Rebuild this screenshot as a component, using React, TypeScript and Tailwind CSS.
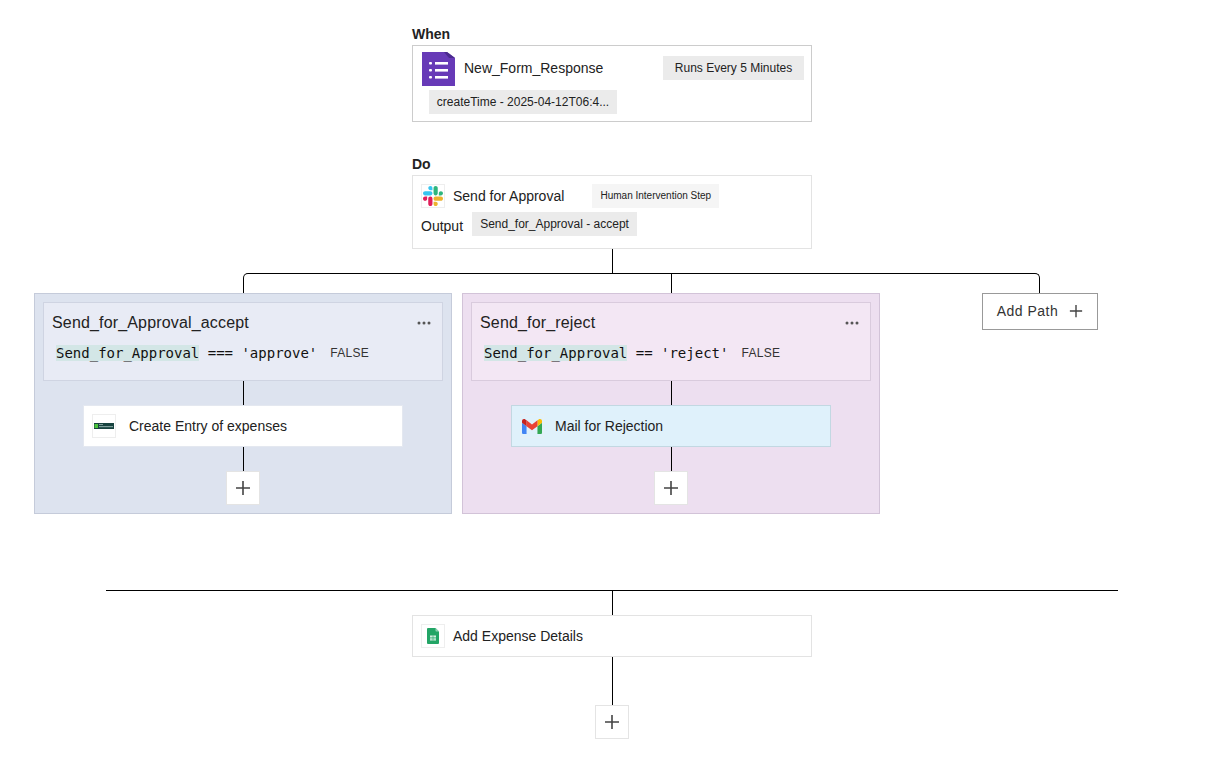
import React from "react";

const FormsIcon = () => (
  <svg width="35" height="35" viewBox="0 0 35 35" className="shrink-0">
    <path d="M1 0h25l8 6v28H1z" fill="#673ab7" />
    <path d="M23 0h3l8 6v0h-6z" fill="#4a2a8e" />
    <rect x="8" y="10" width="3" height="2.6" fill="#fff" rx="1" />
    <rect x="8" y="17" width="3" height="2.6" fill="#fff" rx="1" />
    <rect x="8" y="24" width="3" height="2.6" fill="#fff" rx="1" />
    <rect x="14" y="10" width="13" height="2.6" fill="#fff" />
    <rect x="14" y="17" width="13" height="2.6" fill="#fff" />
    <rect x="14" y="24" width="13" height="2.6" fill="#fff" />
  </svg>
);

const SlackIcon = () => (
  <svg width="20" height="20" viewBox="0 0 122.8 122.8">
    <path d="M25.8 77.6c0 7.1-5.8 12.9-12.9 12.9S0 84.7 0 77.6s5.8-12.9 12.9-12.9h12.9v12.9z" fill="#E01E5A" />
    <path d="M32.3 77.6c0-7.1 5.8-12.9 12.9-12.9s12.9 5.8 12.9 12.9v32.3c0 7.1-5.8 12.9-12.9 12.9s-12.9-5.8-12.9-12.9V77.6z" fill="#E01E5A" />
    <path d="M45.2 25.8c-7.1 0-12.9-5.8-12.9-12.9S38.1 0 45.2 0s12.9 5.8 12.9 12.9v12.9H45.2z" fill="#36C5F0" />
    <path d="M45.2 32.3c7.1 0 12.9 5.8 12.9 12.9s-5.8 12.9-12.9 12.9H12.9C5.8 58.1 0 52.3 0 45.2s5.8-12.9 12.9-12.9h32.3z" fill="#36C5F0" />
    <path d="M97 45.2c0-7.1 5.8-12.9 12.9-12.9s12.9 5.8 12.9 12.9-5.8 12.9-12.9 12.9H97V45.2z" fill="#2EB67D" />
    <path d="M90.5 45.2c0 7.1-5.8 12.9-12.9 12.9s-12.9-5.8-12.9-12.9V12.9C64.7 5.8 70.5 0 77.6 0s12.9 5.8 12.9 12.9v32.3z" fill="#2EB67D" />
    <path d="M77.6 97c7.1 0 12.9 5.8 12.9 12.9s-5.8 12.9-12.9 12.9-12.9-5.8-12.9-12.9V97h12.9z" fill="#ECB22E" />
    <path d="M77.6 90.5c-7.1 0-12.9-5.8-12.9-12.9s5.8-12.9 12.9-12.9h32.3c7.1 0 12.9 5.8 12.9 12.9s-5.8 12.9-12.9 12.9H77.6z" fill="#ECB22E" />
  </svg>
);

const GmailIcon = () => (
  <svg width="20" height="15" viewBox="52 42 88 66">
    <path fill="#4285f4" d="M58 108h14V74L52 59v43c0 3.32 2.69 6 6 6" />
    <path fill="#34a853" d="M120 108h14c3.32 0 6-2.69 6-6V59l-20 15" />
    <path fill="#fbbc04" d="M120 48v26l20-15v-8c0-7.42-8.47-11.65-14.4-7.2" />
    <path fill="#ea4335" d="M72 74V48l24 18 24-18v26L96 92" />
    <path fill="#c5221f" d="M52 51v8l20 15V48l-5.6-4.2c-5.94-4.45-14.4-.22-14.4 7.2" />
  </svg>
);

const SheetsIcon = () => (
  <svg width="12" height="16" viewBox="0 0 12 16">
    <path d="M1 0h7.5L12 3.5V15a1 1 0 0 1-1 1H1a1 1 0 0 1-1-1V1a1 1 0 0 1 1-1z" fill="#23a566" />
    <path d="M8.5 0 12 3.5H9.2a.7.7 0 0 1-.7-.7z" fill="#8ed1b1" />
    <path d="M3 7.5h6v5H3z" fill="#fff" fillOpacity="0.85" />
    <path d="M3 9.4h6M3 10.9h6M6 7.5v5" stroke="#23a566" strokeWidth="0.6" />
  </svg>
);

const AppLogo = () => (
  <svg width="20" height="6" viewBox="0 0 20 6">
    <rect width="20" height="6" fill="#17433f" />
    <rect x="0.5" y="1" width="3.5" height="4" fill="#4bc53c" />
    <rect x="5" y="1.2" width="4" height="0.8" fill="#9fb8b4" />
    <rect x="5" y="3" width="14" height="1.2" fill="#7fa09c" />
  </svg>
);

const IconBox = ({ children, border = "border-[#eeeeee]" }: { children: React.ReactNode; border?: string }) => (
  <div className={`flex h-6 w-6 shrink-0 items-center justify-center border ${border}`}>{children}</div>
);

const Plus = ({ size = 16 }: { size?: number }) => (
  <svg width={size} height={size} viewBox="0 0 16 16" fill="none" stroke="#444444" strokeWidth="1.6">
    <path d="M8 1v14M1 8h14" />
  </svg>
);

const VLine = ({ h }: { h: string }) => <div className={`w-px shrink-0 bg-black ${h}`} />;

const PlusBox = () => (
  <div className="flex h-[34px] w-[34px] shrink-0 items-center justify-center border border-[#e4e4e4] bg-white">
    <Plus />
  </div>
);

const Dots = () => (
  <svg width="14" height="4" viewBox="0 0 14 4" fill="#555555">
    <circle cx="2" cy="2" r="1.5" />
    <circle cx="7" cy="2" r="1.5" />
    <circle cx="12" cy="2" r="1.5" />
  </svg>
);

type PathProps = {
  panel: string;
  header: string;
  title: string;
  op: string;
  action: React.ReactNode;
};

const PathPanel = ({ panel, header, title, op, action }: PathProps) => (
  <div className={`flex h-[221px] w-[418px] shrink-0 flex-col items-center border p-2 ${panel}`}>
    <div className={`h-[79px] w-[400px] shrink-0 border px-2 ${header}`}>
      <div className="flex h-[38px] items-center justify-between pr-[3px] pt-[1px]">
        <span className="text-base tracking-[0.16px] text-[#222222]">{title}</span>
        <Dots />
      </div>
      <div className="mt-1 flex items-center pl-1 text-sm leading-[16px] text-[#111111]">
        <span className="bg-[#d3e6e6] font-['DejaVu_Sans_Mono',monospace]">Send_for_Approval</span>
        <span className="font-['DejaVu_Sans_Mono',monospace] whitespace-pre">{op}</span>
        <span className="ml-[13px] text-xs tracking-[0.3px] text-[#333333]">FALSE</span>
      </div>
    </div>
    <VLine h="h-6" />
    {action}
    <VLine h="h-6" />
    <PlusBox />
  </div>
);

export default function App() {
  return (
    <div className="flex h-[763px] w-[1224px] flex-col items-center overflow-hidden bg-white pt-6 font-['Liberation_Sans',Arial,sans-serif] text-sm text-[#222222]">
      <div className="h-[21px] w-[400px] text-sm font-bold leading-5 text-[#222222]">When</div>
      <div className="h-[77px] w-[400px] shrink-0 border border-[#cccccc] pl-2 pr-[7px] pt-[6px]">
        <div className="flex h-[33px] items-start">
          <FormsIcon />
          <span className="ml-2 mt-[6px] leading-5">New_Form_Response</span>
          <span className="ml-auto mt-1 flex h-6 w-[141px] items-center justify-center bg-[#ebebeb] text-xs">
            Runs Every 5 Minutes
          </span>
        </div>
        <div className="ml-2 mt-[5px] flex h-6 w-[188px] items-center justify-center bg-[#ebebeb] text-xs">
          createTime - 2025-04-12T06:4...
        </div>
      </div>

      <div className="mt-8 h-[21px] w-[400px] text-sm font-bold leading-5 text-[#222222]">Do</div>
      <div className="h-[74px] w-[400px] shrink-0 border border-[#e3e3e3] pl-2 pt-2">
        <div className="flex h-6 items-center">
          <IconBox>
            <SlackIcon />
          </IconBox>
          <span className="ml-2">Send for Approval</span>
          <span className="ml-7 flex h-6 w-[127px] items-center justify-center bg-[#f5f5f5] text-[10px]">
            Human Intervention Step
          </span>
        </div>
        <div className="mt-1 flex h-6 items-center">
          <span className="mt-[3px]">Output</span>
          <span className="ml-[9px] flex h-6 w-[165px] items-center justify-center bg-[#ebebeb] text-xs">
            Send_for_Approval - accept
          </span>
        </div>
      </div>
      <VLine h="h-6" />

      {/* Branch connector: horizontal rail with rounded ends, dropping into each path */}
      <div className="w-full shrink-0 pl-[243px]">
        <div className="h-5 w-[797px] rounded-t-[5px] border-x border-t border-black pl-[427px]">
          <div className="h-full w-px bg-black" />
        </div>
      </div>

      <div className="flex w-full items-start pl-[34px]">
        <PathPanel
          panel="border-[#c5cbda] bg-[#dde3ef]"
          header="border-[#cfd4e2] bg-[#e8ebf5]"
          title="Send_for_Approval_accept"
          op=" === 'approve'"
          action={
            <div className="flex h-[42px] w-80 shrink-0 items-center border border-[#e4e8f0] bg-white pl-2">
              <IconBox>
                <AppLogo />
              </IconBox>
              <span className="ml-[13px]">Create Entry of expenses</span>
            </div>
          }
        />
        <div className="ml-[10px]">
          <PathPanel
            panel="border-[#d2c3d8] bg-[#eddff0]"
            header="border-[#d9cbdd] bg-[#f3e7f4]"
            title="Send_for_reject"
            op=" == 'reject'"
            action={
              <div className="flex h-[42px] w-80 shrink-0 items-center border border-[#c2d8e2] bg-[#dff1fb] pl-2">
                <IconBox border="border-[#e6f0f6]">
                  <GmailIcon />
                </IconBox>
                <span className="ml-[11px]">Mail for Rejection</span>
              </div>
            }
          />
        </div>
        <div className="ml-[102px] flex h-[37px] w-[116px] shrink-0 items-center justify-center gap-[11px] border border-[#999999] pb-[2px] tracking-[0.5px] text-[#333333]">
          Add Path
          <Plus size={14} />
        </div>
      </div>

      <div className="mt-[76px] h-px w-[1012px] shrink-0 bg-black" />
      <VLine h="h-6" />
      <div className="flex h-[42px] w-[400px] shrink-0 items-center border border-[#e3e3e3] pl-2">
        <IconBox>
          <SheetsIcon />
        </IconBox>
        <span className="ml-2">Add Expense Details</span>
      </div>
      <VLine h="h-12" />
      <PlusBox />
    </div>
  );
}
